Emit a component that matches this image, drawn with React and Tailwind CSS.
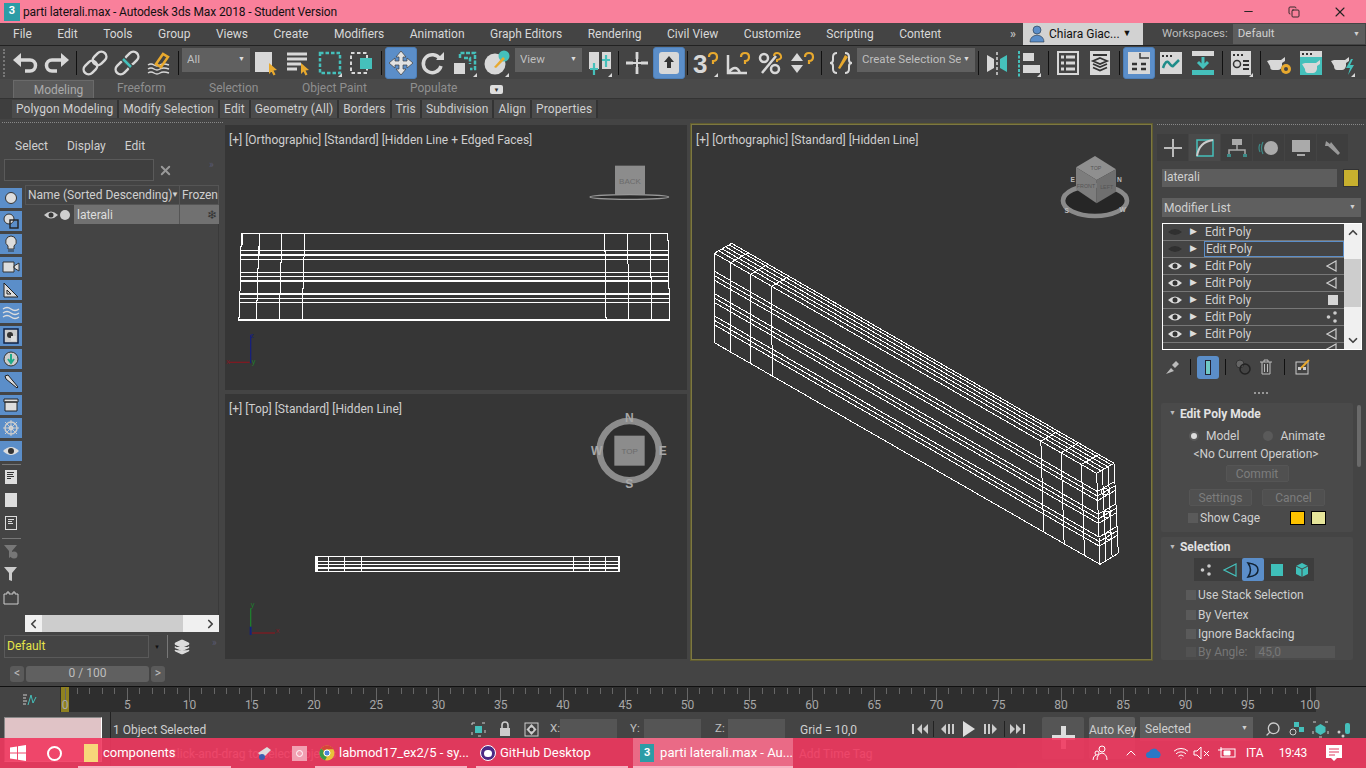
import { X, Minus, Copy, ChevronLeft, ChevronRight, ChevronUp, ChevronDown, Search, Wifi, Layers } from "lucide-react";

const LIGHT = "#d8d8d8";
const TEAL = "#45c0bb";
const GOLD = "#e8a92e";

const S = ({ s = 28, children }) => (
  <svg width={s} height={s} viewBox="0 0 28 28" fill="none">{children}</svg>
);

const Cursor = () => <path d="M17 14l8 7-3.500.5 2 4-2 1-2-4-2.500 2.500z" fill={GOLD} />;
const Corner = () => <path d="M26 28h-4l4-4z" fill={LIGHT} />;

const Undo = ({ flip }) => (
  <S>
    <g transform={flip ? "matrix(-1 0 0 1 28 0)" : undefined}>
      <path d="M8 11h11a5.500 5.500 0 0 1 0 11h-5" stroke={LIGHT} strokeWidth="3.500" />
      <path d="M10 4v14l-8-7z" fill={LIGHT} />
    </g>
  </S>
);

const Chain = ({ broken }) => (
  <S>
    <g stroke={LIGHT} strokeWidth="2.500" transform="rotate(-45 14 14)">
      <rect x="0" y="9" width="15" height="10" rx="5" />
      <rect x="13" y="9" width="15" height="10" rx="5" />
    </g>
    {broken && <path d="M9 9l10 10" stroke="#444" strokeWidth="5" />}
    {broken && <path d="M10 10l8 8" stroke={TEAL} strokeWidth="2.500" />}
  </S>
);

const BindIcon = () => (
  <S>
    <path d="M3 16q3-2 6 0t6 0 9 0M3 20q3-2 6 0t6 0 9 0M3 24q3-2 6 0t6 0 9 0" stroke={LIGHT} strokeWidth="1.500" />
    <path d="M11 15l7-10 5 3-7 10z" stroke={GOLD} strokeWidth="2.500" />
  </S>
);

const SelectObj = () => (
  <S><rect x="3" y="3" width="17" height="20" fill={LIGHT} /><Cursor /></S>
);

const SelectByName = () => (
  <S>
    <path d="M3 5h20M3 10h20M3 15h14M3 20h10" stroke={LIGHT} strokeWidth="3" />
    <Cursor />
  </S>
);

const RectRegion = () => (
  <S><rect x="4" y="4" width="20" height="20" stroke={TEAL} strokeWidth="2.500" strokeDasharray="3.500 2" /><Corner /></S>
);

const WindowCross = () => (
  <S>
    <rect x="3" y="4" width="16" height="20" stroke={LIGHT} strokeWidth="2" strokeDasharray="3.500 2.500" />
    <rect x="12" y="9" width="12" height="11" fill={TEAL} />
  </S>
);

const MoveIcon = () => (
  <S>
    <path d="M14 2l5 6h-3v4h4v-3l6 5-6 5v-3h-4v4h3l-5 6-5-6h3v-4H8v3l-6-5 6-5v3h4V8H9z" fill="#e2e2e2" stroke="#3c3c3c" strokeWidth=".7" />
  </S>
);

const RotateIcon = () => (
  <S>
    <path d="M21 10a9 9 0 1 0 1 7" stroke={LIGHT} strokeWidth="3.500" />
    <path d="M17 11h8V3z" fill={LIGHT} />
  </S>
);

const ScaleIcon = () => (
  <S>
    <rect x="3" y="14" width="11" height="11" fill={LIGHT} />
    <path d="M9 9V4h15v16h-5M13 9h6v6" stroke={TEAL} strokeWidth="2.500" strokeDasharray="4 1.500" />
    <Corner />
  </S>
);

const PlaceIcon = () => (
  <S>
    <circle cx="12" cy="15" r="10.500" fill={LIGHT} />
    <circle cx="21" cy="7" r="5.500" fill={TEAL} />
    <path d="M11 18l9-10 2 2-9 9z" fill={GOLD} />
    <Corner />
  </S>
);

const PivotIcon = () => (
  <S>
    <rect x="3" y="3" width="10" height="17" fill={LIGHT} />
    <rect x="16" y="3" width="9" height="17" fill={LIGHT} />
    <path d="M8 14v12M4 20h8M20 6v12M16 11h8" stroke={TEAL} strokeWidth="2.200" />
    <Corner />
  </S>
);

const Manipulate = () => (
  <S>
    <path d="M14 3v22M3 14h22" stroke={LIGHT} strokeWidth="2" />
    <path d="M14 3v7M14 18v7M3 14h7M18 14h7" stroke={LIGHT} strokeWidth="2.800" />
  </S>
);

const KeyOverride = () => (
  <S>
    <rect x="4" y="3" width="20" height="22" rx="3" fill={LIGHT} />
    <path d="M14 7l5 6h-3v6h-4v-6H9z" fill="#333" />
  </S>
);

const Snap = ({ label }) => (
  <S>
    <text x="1" y="24" fontSize="26" fontWeight="700" fill={LIGHT} fontFamily="Liberation Sans">{label}</text>
    <path d="M17 8q0-4 4-4t4 4-4 4v3" stroke={GOLD} strokeWidth="2.200" />
    <Corner />
  </S>
);

const AngleSnap = () => (
  <S>
    <path d="M4 6v18h19M4 24q8-10 12 0" stroke={LIGHT} strokeWidth="2.500" />
    <path d="M17 8q0-4 4-4t4 4-4 4v3" stroke={GOLD} strokeWidth="2.200" />
  </S>
);

const PercentSnap = () => (
  <S>
    <circle cx="8" cy="9" r="4" stroke={LIGHT} strokeWidth="2.500" />
    <circle cx="19" cy="20" r="4" stroke={LIGHT} strokeWidth="2.500" />
    <path d="M6 24L20 7" stroke={LIGHT} strokeWidth="2.500" />
    <path d="M18 7q0-3 3-3t4 3-4 4v2" stroke={GOLD} strokeWidth="2" />
  </S>
);

const SpinnerSnap = () => (
  <S>
    <path d="M3 12l6-8 6 8zM3 16h12l-6 8z" fill={LIGHT} />
    <path d="M17 8q0-4 4-4t4 4-4 4v3" stroke={GOLD} strokeWidth="2.200" />
  </S>
);

const NamedSets = () => (
  <S>
    <path d="M10 4q-4 0-4 4v3q0 3-3 3 3 0 3 3v3q0 4 4 4M18 4q4 0 4 4v3q0 3 3 3-3 0-3 3v3q0 4-4 4" stroke={LIGHT} strokeWidth="2" />
    <path d="M11 19l7-13 3 2-8 12z" fill={GOLD} />
  </S>
);

const Mirror = () => (
  <S>
    <path d="M4 6l7 4v9l-7 4z" fill={LIGHT} />
    <path d="M24 6l-7 4v9l7 4z" fill={TEAL} />
    <path d="M14 3v23" stroke={LIGHT} strokeWidth="1.500" strokeDasharray="3 2" />
  </S>
);

const Align = () => (
  <S>
    <path d="M4 2v26" stroke={TEAL} strokeWidth="2" strokeDasharray="3 1.500" />
    <rect x="8" y="4" width="11" height="8" fill={LIGHT} />
    <rect x="8" y="16" width="17" height="8" fill={LIGHT} />
    <Corner />
  </S>
);

const LayerMgr = () => (
  <S>
    <rect x="4" y="3" width="20" height="22" stroke={LIGHT} strokeWidth="2" />
    <path d="M7 8h3M12 8h9M7 14h3M12 14h9M7 20h3M12 20h9" stroke={LIGHT} strokeWidth="3" />
  </S>
);

const RibbonToggle = () => (
  <S>
    <rect x="4" y="2" width="20" height="24" fill={LIGHT} />
    <path d="M7 6h14" stroke="#333" strokeWidth="2" />
    <path d="M14 9l7 3-7 3-7-3zM7 15l7 3 7-3M7 18.500l7 3 7-3" stroke="#333" strokeWidth="1.800" />
  </S>
);

const Schematic = () => (
  <S>
    <rect x="3" y="3" width="22" height="22" fill={LIGHT} />
    <path d="M15 4v5h9" stroke="#3a3a3a" strokeWidth="1.500" />
    <path d="M7 15h5M16 15h5M7 20h5M16 20h5" stroke="#333" strokeWidth="2.500" />
  </S>
);

const CurveEditor = () => (
  <S>
    <rect x="3" y="3" width="22" height="22" fill={LIGHT} />
    <path d="M5 7h2M9 7h2M13 7h2" stroke="#333" strokeWidth="2" />
    <path d="M6 19q3-9 6-5t4 3 6-6" stroke="#1f8d8a" strokeWidth="2.500" />
  </S>
);

const DopeSheet = () => (
  <S>
    <rect x="3" y="2" width="22" height="5" fill={LIGHT} />
    <path d="M14 8v9M9 13l5 5 5-5" stroke={TEAL} strokeWidth="3" />
    <rect x="3" y="21" width="22" height="5" fill={TEAL} />
  </S>
);

const Material = () => (
  <S>
    <rect x="4" y="2" width="20" height="24" fill={LIGHT} />
    <path d="M6 6h2M10 6h2M14 6h2" stroke="#333" strokeWidth="2" />
    <circle cx="10" cy="15" r="3.500" stroke="#333" strokeWidth="1.500" />
    <path d="M16 12h6M16 16h6M16 20h6" stroke="#333" strokeWidth="2" />
    <Corner />
  </S>
);

const Teapot = ({ x = 5, y = 10 }) => (
  <path transform={`translate(${x} ${y})`} d="M3 4h11l4-3v4l-3 2v3q-1 4-4 4H6q-3 0-3-4L0 5z" fill={LIGHT} />
);

const RenderSetup = () => (
  <S>
    <Teapot x={2} y={7} />
    <circle cx="21" cy="20" r="5" fill={GOLD} />
    <circle cx="21" cy="20" r="2" fill="#444" />
  </S>
);

const RenderFrame = () => (
  <S>
    <rect x="3" y="2" width="22" height="24" fill={TEAL} />
    <rect x="3" y="2" width="22" height="6" fill={LIGHT} />
    <path d="M5 5h2M9 5h2M13 5h2" stroke="#333" strokeWidth="2" />
    <Teapot x={5} y={10} />
  </S>
);

const RenderGo = () => (
  <S>
    <Teapot x={2} y={7} />
    <path d="M22 10l-5 9h4l-2 7 6-10h-4l3-6z" fill={TEAL} />
    <Corner />
  </S>
);

const Sep = ({ w = 6 }) => (
  <div className="flex justify-center shrink-0" style={{ width: w }}>
    <div className="w-px h-[24px] my-[4px] bg-[#111]" />
  </div>
);

const Btn = ({ active, w = "w-[32px]", children }) => (
  <div className={`${w} h-[32px] shrink-0 flex items-center justify-center rounded-[3px] ${active ? "bg-[#5b8ec9] border border-[#4d7fb8]" : ""}`}>
    {children}
  </div>
);

const ToolSelect = ({ w, label }) => (
  <div className={`${w} h-[24px] -mt-[6px] shrink-0 bg-[#606060] flex items-center justify-between px-[5px] text-[#bfbfbf] text-[11.500px]`}>
    <span className="truncate">{label}</span>
    <span className="text-[7px] text-[#ddd]">▼</span>
  </div>
);

const Grip = () => <div className="w-[3px] h-[28px] border-l-2 border-dotted border-[#777] shrink-0" />;

const MENUS = ["File", "Edit", "Tools", "Group", "Views", "Create", "Modifiers", "Animation", "Graph Editors", "Rendering", "Civil View", "Customize", "Scripting", "Content"];
const TABS = ["Modeling", "Freeform", "Selection", "Object Paint", "Populate"];
const RIBBON = ["Polygon Modeling", "Modify Selection", "Edit", "Geometry (All)", "Borders", "Tris", "Subdivision", "Align", "Properties"];

function TitleBar() {
  return (
    <div className="h-[23px] bg-[#f9809b] flex items-center text-[#111] text-[12px] shrink-0">
      <div className="ml-[4px] w-[16px] h-[18px] bg-[#2c9ca6] text-white text-[11px] font-bold flex items-center justify-center">3</div>
      <span className="ml-[3px] tracking-[-0.13px]">parti laterali.max - Autodesk 3ds Max 2018 - Student Version</span>
      <div className="ml-auto mr-[3px] flex items-center text-[#222]">
        <div className="w-[46px] flex justify-center"><Minus size={13} strokeWidth={1.800} /></div>
        <div className="w-[46px] flex justify-center"><Copy size={12} strokeWidth={1.800} /></div>
        <div className="w-[46px] flex justify-center"><X size={16} strokeWidth={1.600} /></div>
      </div>
    </div>
  );
}

function MenuBar() {
  return (
    <div className="h-[23px] bg-[#444] flex items-center shrink-0 border-b border-[#222]">
      <div className="flex gap-[25.500px] pl-[13px] text-[12px] text-[#d8d8d8] w-[1010px]">
        {MENUS.map((m) => <span key={m}>{m}</span>)}
      </div>
      <span className="text-[#bbb] text-[12px] w-[13px] font-bold">»</span>
      <div className="w-[120px] h-[22px] bg-[#d2d2d2] flex items-center text-[#111] text-[12px]">
        <svg width="20" height="20" viewBox="0 0 20 20" className="ml-[4px]">
          <circle cx="10" cy="6" r="4" fill="#5b8ec9" stroke="#234" strokeWidth=".6" />
          <path d="M3 18q0-6 7-7 7 1 7 7z" fill="#5b8ec9" stroke="#234" strokeWidth=".6" />
        </svg>
        <span className="ml-[2px] whitespace-nowrap">Chiara Giac...</span>
        <span className="ml-[3px] text-[9px]">▼</span>
      </div>
      <span className="ml-[19px] text-[11.500px] text-[#bdbdbd]">Workspaces:</span>
      <div className="ml-[5px] w-[132px] h-[20px] bg-[#5d5d5d] flex items-center justify-between px-[5px] text-[11.500px] text-[#d0d0d0]">
        <span>Default</span>
        <span className="text-[7px]">▼</span>
      </div>
    </div>
  );
}

function MainToolbar() {
  return (
    <div className="h-[33px] bg-[#444] flex items-center shrink-0 pl-[3px]">
      <Grip />
      <div className="w-[3px]" />
      <Btn><Undo /></Btn>
      <Btn><Undo flip /></Btn>
      <Sep />
      <Btn><Chain /></Btn>
      <Btn><Chain broken /></Btn>
      <Btn><BindIcon /></Btn>
      <Sep w={7} />
      <ToolSelect w="w-[68px]" label="All" />
      <Btn><SelectObj /></Btn>
      <Btn><SelectByName /></Btn>
      <Btn><RectRegion /></Btn>
      <Btn><WindowCross /></Btn>
      <Sep w={7} />
      <Btn active><MoveIcon /></Btn>
      <Btn><RotateIcon /></Btn>
      <Btn><ScaleIcon /></Btn>
      <Btn><PlaceIcon /></Btn>
      <div className="w-[2px]" />
      <ToolSelect w="w-[67px]" label="View" />
      <div className="w-[2px]" />
      <Btn><PivotIcon /></Btn>
      <Sep w={5} />
      <Btn><Manipulate /></Btn>
      <Btn active><KeyOverride /></Btn>
      <Sep w={5} />
      <Btn><Snap label="3" /></Btn>
      <Btn><AngleSnap /></Btn>
      <Btn><PercentSnap /></Btn>
      <Btn><SpinnerSnap /></Btn>
      <Sep w={7} />
      <Btn><NamedSets /></Btn>
      <ToolSelect w="w-[118px]" label="Create Selection Se" />
      <Sep />
      <Btn><Mirror /></Btn>
      <Btn><Align /></Btn>
      <Sep w={7} />
      <Btn><LayerMgr /></Btn>
      <Btn><RibbonToggle /></Btn>
      <Sep w={7} />
      <Btn active><Schematic /></Btn>
      <Btn><CurveEditor /></Btn>
      <Btn><DopeSheet /></Btn>
      <Sep />
      <Btn><Material /></Btn>
      <Sep />
      <Btn><RenderSetup /></Btn>
      <Btn><RenderFrame /></Btn>
      <Btn><RenderGo /></Btn>
    </div>
  );
}

function Ribbon() {
  return (
    <div className="h-[41px] shrink-0 bg-[#444] pl-[8px] flex flex-col">
      <div className="h-[20px] flex items-end bg-[#4a4a4a] -ml-[8px] pl-[13px] border-b border-[#333] text-[12px] text-[#8f8f8f]">
        <div className="h-[18px] w-[81px] bg-[#5a5a5a] border border-b-0 border-[#6a6a6a] text-center text-[#aaa] leading-[18px] pl-[10px]">{TABS[0]}</div>
        <span className="ml-[23px] w-[92px] leading-[19px]">{TABS[1]}</span>
        <span className="w-[93px] leading-[19px]">{TABS[2]}</span>
        <span className="w-[108px] leading-[19px]">{TABS[3]}</span>
        <span className="w-[80px] leading-[19px]">{TABS[4]}</span>
        <div className="mb-[4px] w-[13px] h-[9px] bg-[#ddd] rounded-[2px] flex items-center justify-center text-[6px] text-[#333]">▼</div>
      </div>
      <div className="h-[20px] flex items-center -ml-[8px] pl-[12px] bg-[#3e3e3e] text-[12px] text-[#d0d0d0] tracking-[0.1px]">
        {RIBBON.map((r) => (
          <span key={r} className="px-[4px] h-[18px] leading-[18px] bg-[#4b4b4b] border-r-2 border-[#333] whitespace-nowrap">{r}</span>
        ))}
      </div>
    </div>
  );
}

const Blue = ({ children }) => (
  <div className="w-[22px] h-[20px] mb-[3px] bg-[#5b8ec9] flex items-center justify-center">{children}</div>
);

const SIDE_BLUE = [
  <circle key="a" cx="9" cy="9" r="5.500" fill="#ddd" stroke="#333" />,
  <g key="b"><circle cx="7" cy="7" r="5" fill="#ddd" stroke="#333" /><rect x="8" y="8" width="8" height="8" fill="none" stroke="#222" strokeWidth="1.400" /></g>,
  <path key="c" d="M9 1a5.500 5.500 0 0 1 3 10v3H6v-3A5.500 5.500 0 0 1 9 1zM6 16h6" fill="#ddd" stroke="#333" />,
  <path key="d" d="M1 4h11v10H1zM12 8l5-3v8l-5-3z" fill="#ddd" stroke="#333" />,
  <path key="e" d="M2 2v14h14zM5 9v4h4z" fill="#ddd" stroke="#222" />,
  <path key="f" d="M1 5q4-3 8 0t8 0M1 9q4-3 8 0t8 0M1 13q4-3 8 0t8 0" fill="none" stroke="#ddd" strokeWidth="1.300" />,
  <g key="g"><rect x="2" y="2" width="14" height="14" fill="#ccc" stroke="#124" strokeWidth="1.500" /><circle cx="8" cy="8" r="3" fill="#333" /><rect x="9" y="9" width="5" height="5" fill="#ddd" /></g>,
  <g key="h"><circle cx="9" cy="9" r="7" fill="#ccc" stroke="#333" /><path d="M9 4v8M6 9l3 4 3-4" stroke="#2a8" strokeWidth="2" fill="none" /></g>,
  <path key="i" d="M3 3l3-1 10 12-1 1L4 6z" fill="#ddd" stroke="#222" />,
  <path key="j" d="M2 3h14v3H2zM3 6h12v9H3z" fill="#ddd" stroke="#222" />,
  <g key="k"><circle cx="9" cy="9" r="6" fill="none" stroke="#ccc" strokeWidth="1.500" /><circle cx="9" cy="9" r="2.500" fill="#ddd" /><path d="M9 1v16M1 9h16M3 3l12 12M15 3L3 15" stroke="#ccc" /></g>,
  <g key="l"><path d="M1 9q8-8 16 0-8 8-16 0z" fill="#ddd" /><circle cx="9" cy="9" r="3" fill="#333" /></g>,
];

function SceneExplorer() {
  return (
    <div className="w-[225px] h-full bg-[#444] shrink-0 flex flex-col text-[12px] text-[#d0d0d0]">
      <div className="h-[3px] mt-[2px] mx-[2px] border-t border-dotted border-[#888]" />
      <div className="flex mt-[14px] h-[14px] items-center pl-[15px] gap-[19px]">
        <span>Select</span><span>Display</span><span>Edit</span>
      </div>
      <div className="mt-[6px] flex items-center h-[22px]">
        <div className="ml-[4px] w-[150px] h-[22px] border border-[#5a5a5a] bg-[#3f3f3f]" />
        <X size={15} strokeWidth={3} className="ml-[4px] text-[#9a9a9a]" />
        <span className="ml-[36px] -mt-[12px] text-[10px] text-[#585870]">»</span>
      </div>
      <div className="mt-[4px] h-[447px] flex">
        <div className="w-[25px] pt-[3px] shrink-0">
          {SIDE_BLUE.map((icon, i) => (
            <Blue key={i}><svg width="18" height="18" viewBox="0 0 18 18">{icon}</svg></Blue>
          ))}
          <div className="mt-[2px] ml-[2px] w-[19px] h-px bg-[#777]" />
          <div className="ml-[5px] mt-[5px] w-[12px] h-[14px] bg-[#ddd] flex flex-col gap-[1px] p-[2px]">
            <div className="h-px w-[7px] bg-[#333]" /><div className="h-px w-[6px] bg-[#333]" /><div className="h-px w-[7px] bg-[#333]" /><div className="h-px w-[4px] bg-[#333]" />
          </div>
          <div className="ml-[5px] mt-[9px] w-[12px] h-[14px] bg-[#ddd]" />
          <div className="ml-[5px] mt-[9px] w-[12px] h-[14px] border border-[#ddd] flex flex-col gap-[1px] p-[2px]">
            <div className="h-px w-[6px] bg-[#ddd]" /><div className="h-px w-[4px] bg-[#ddd]" /><div className="h-px w-[5px] bg-[#ddd]" />
          </div>
          <div className="mt-[8px] ml-[2px] w-[19px] h-px bg-[#777]" />
          <svg width="22" height="16" viewBox="0 0 22 16" className="mt-[5px]"><path d="M4 1h13l-5 6v5l-3 2V7z" fill="#777" /><circle cx="14" cy="11" r="3.500" fill="#777" /></svg>
          <svg width="22" height="16" viewBox="0 0 22 16" className="mt-[6px]"><path d="M4 1h13l-5 6v8l-3-1V7z" fill="#ccc" /></svg>
          <svg width="22" height="16" viewBox="0 0 22 16" className="mt-[8px]"><path d="M4 4h3V2h2v2h4V2h2v2h3v10H4z" fill="none" stroke="#ccc" /></svg>
        </div>
        <div className="w-[194px] flex flex-col">
          <div className="h-[20px] flex items-center border border-[#555] bg-[#444]">
            <span className="pl-[2px] w-[145px] whitespace-nowrap">Name (Sorted Descending)</span>
            <span className="text-[8px] w-[10px]">▼</span>
            <div className="h-full border-l border-[#555] pl-[2px] leading-[18px] whitespace-nowrap">Frozen</div>
          </div>
          <div className="h-[19px] flex items-center">
            <svg width="16" height="12" viewBox="0 0 16 12" className="ml-[18px]">
              <path d="M1 6q7-7 14 0-7 7-14 0z" fill="#ccc" /><circle cx="8" cy="6" r="2.500" fill="#333" />
            </svg>
            <div className="ml-[1px] w-[10px] h-[10px] rounded-full bg-[#d0d0d0]" />
            <div className="ml-[4px] flex-1 h-full bg-[#717171] flex items-center justify-between pl-[3px] text-[#ddd]">
              <span>laterali</span>
              <div className="h-full w-[40px] border-l border-[#555] flex items-center justify-end pr-[2px] text-[#333] text-[12px]">❄</div>
            </div>
          </div>
          <div className="flex-1 border-r border-[#3a3a3a]" />
          <div className="h-[17px] bg-[#f0f0f0] flex items-center">
            <ChevronLeft size={14} strokeWidth={3} className="text-[#444] w-[17px]" />
            <div className="w-[141px] h-full bg-[#cdcdcd]" />
            <div className="flex-1" />
            <ChevronRight size={14} strokeWidth={3} className="text-[#444] w-[17px]" />
          </div>
        </div>
      </div>
      <div className="mt-[3px] h-[23px] flex items-center">
        <div className="ml-[4px] w-[145px] h-[23px] border border-[#5a5a5a] text-[#e5e54a] pl-[2px] leading-[20px]">Default</div>
        <span className="ml-[5px] text-[6px] text-[#111]">▼</span>
        <div className="ml-[7px] w-px h-[23px] bg-[#777]" />
        <Layers size={16} className="ml-[6px] text-[#ddd]" fill="#ddd" />
        <span className="ml-[22px] -mt-[8px] text-[10px] text-[#585870]">»</span>
      </div>
    </div>
  );
}

const FRACS = [0, 0.2, 0.25, 0.3, 0.45, 0.5, 0.55, 0.7, 0.75, 0.8, 1];
const lerp = (a, b, t) => [a[0] + (b[0] - a[0]) * t, a[1] + (b[1] - a[1]) * t];
const Seg = ({ a, b }) => <line x1={a[0]} y1={a[1]} x2={b[0]} y2={b[1]} />;

const FRONT_V = [
  "51,325 51,360 47,365 47,495 43,500 43,575 40,585",
  "103,325 101,430 97,432 97,525 94,530 94,585",
  "170,325 170,412 166,414 166,505 163,507 163,585",
  "238,325 238,395 235,397 235,490 232,492 232,585",
  "1138,325 1138,378 1141,380 1141,570 1145,585",
  "1207,325 1207,415 1210,418 1210,585",
  "1276,325 1276,455 1279,458 1279,585",
  "1328,325 1328,345 1331,350 1331,490 1334,490 1334,585",
];

function Axis({ labels }) {
  const [h, v] = labels;
  return (
    <g fontSize="22" fontFamily="Liberation Sans">
      <path d="M77 630v85" stroke="#17207a" strokeWidth="4" />
      <path d="M12 712h62" stroke="#7d1a22" strokeWidth="4" />
      <text x="3" y="716" fill="#7d1a22">{h}</text>
      <text x="76" y="640" fill="#17207a">{v}</text>
      <text x="80" y="716" fill="#1e7d2d">y</text>
    </g>
  );
}

function BackView() {
  return (
    <svg viewBox="0 0 1395 795" className="absolute left-0 top-0 w-[465px] h-[265px]" fill="none">
      <g stroke="#fff" strokeWidth="3.500" shapeRendering="crispEdges">
        {FRONT_V.map((p) => <polyline key={p} points={p} />)}
        {FRACS.map((f) => {
          const y = 325 + f * 260;
          return <line key={f} x1={51 - f * 11} y1={y} x2={1328 + f * 7} y2={y} />;
        })}
      </g>
      <Axis labels={["x", "z"]} />
      <rect x="1170" y="122" width="90" height="88" fill="#8c8c8c" />
      <text x="1215" y="176" textAnchor="middle" fontSize="24" fontFamily="Liberation Sans" fill="#6b6b6b">BACK</text>
      <ellipse cx="1213" cy="216" rx="118" ry="7" stroke="#999" strokeWidth="4" fill="#2a2a2a" />
    </svg>
  );
}

function TopView() {
  return (
    <svg viewBox="0 0 1395 795" className="absolute left-0 top-[1px] w-[465px] h-[265px]" fill="none">
      <g stroke="#fff" strokeWidth="3.500" shapeRendering="crispEdges">
        <rect x="272" y="485" width="911" height="44" strokeWidth="4" />
        {[499, 509, 519].map((y) => <line key={y} x1="272" y1={y} x2="1183" y2={y} />)}
        {[310, 358, 410, 1045, 1093, 1141].map((x) => <line key={x} x1={x} y1="485" x2={x} y2="530" />)}
        <line x1="274" y1="485" x2="274" y2="530" strokeWidth="7" />
        <line x1="1181" y1="485" x2="1181" y2="530" strokeWidth="7" />
      </g>
      <path d="M77 640v80" stroke="#1e7d2d" strokeWidth="4" />
      <path d="M80 714h70" stroke="#7d1a22" strokeWidth="4" />
      <path d="M77 695v25" stroke="#17207a" strokeWidth="6" />
      <g fontSize="22" fontFamily="Liberation Sans">
        <text x="77" y="636" fill="#1e7d2d">y</text>
        <text x="152" y="714" fill="#7d1a22">x</text>
      </g>
      <circle cx="1213" cy="167" r="89" stroke="#8c8c8c" strokeWidth="20" fill="#2e2e2e" />
      <rect x="1168" y="122" width="91" height="90" fill="#8c8c8c" />
      <g fontFamily="Liberation Sans" textAnchor="middle">
        <text x="1214" y="176" fontSize="24" fill="#6b6b6b">TOP</text>
        <g fontSize="36" fontWeight="700" fill="#a8a8a8">
          <text x="1213" y="82">N</text>
          <text x="1213" y="278">S</text>
          <text x="1115" y="180">W</text>
          <text x="1313" y="180">E</text>
        </g>
      </g>
    </svg>
  );
}

function PerspView() {
  const A = [43, 70], B = [95, 40], D = [1190, 730], C = [1242, 700], E = [43, 338], F = [1200, 1003], G = [1255, 970];
  return (
    <svg viewBox="0 0 1290 1035" className="absolute left-[8px] top-[105px] w-[430px] h-[345px]" fill="none">
      <g stroke="#fff" strokeWidth="3" shapeRendering="crispEdges">
        {FRACS.map((f) => <Seg key={f} a={lerp(A, E, f)} b={lerp(D, F, f)} />)}
        {[0, 0.25, 0.45, 0.65, 0.85, 1].map((t) => <Seg key={t} a={lerp(A, B, t)} b={lerp(D, C, t)} />)}
        {[0, 0.0427, 0.095, 0.15, 0.854, 0.907, 0.96, 1].map((s) => (
          <g key={s}>
            <Seg a={lerp(A, D, s)} b={lerp(E, F, s)} />
            <Seg a={lerp(A, D, s)} b={lerp(B, C, s)} />
          </g>
        ))}
        {FRACS.map((f) => <Seg key={f} a={lerp(D, F, f)} b={lerp(C, G, f)} />)}
        {[0.33, 0.66, 1].map((t) => <Seg key={t} a={lerp(D, C, t)} b={lerp(F, G, t)} />)}
        <Seg a={F} b={G} />
        {[[1215, 785], [1220, 853], [1225, 918]].map(([x, y]) => <circle key={x} cx={x} cy={y} r="10" />)}
      </g>
    </svg>
  );
}

function PerspCube() {
  return (
    <svg viewBox="0 0 270 225" className="absolute left-[358px] top-[25px] w-[90px] h-[75px]">
      <ellipse cx="135" cy="152" rx="96" ry="46" fill="#262626" stroke="#8a8a8a" strokeWidth="14" />
      <path d="M78 52l57-34 63 40-58 32z" fill="#8f8f8f" />
      <path d="M78 52l62 38v70l-62-42z" fill="#7d7d7d" />
      <path d="M140 90l58-32v67l-58 35z" fill="#6f6f6f" />
      <g fontSize="16" fontFamily="Liberation Sans" fill="#555" textAnchor="middle">
        <text x="138" y="60">TOP</text>
        <text x="108" y="115">FRONT</text>
        <text x="170" y="118">LEFT</text>
      </g>
      <g fontSize="20" fontWeight="700" fontFamily="Liberation Sans" fill="#bbb" textAnchor="middle">
        <text x="68" y="95">E</text>
        <text x="208" y="95">N</text>
        <text x="50" y="190">S</text>
        <text x="218" y="185">W</text>
      </g>
    </svg>
  );
}

const VpLabel = ({ children }) => (
  <div className="relative pl-[4px] pt-[6px] text-[12px] text-[#cfcfcf] whitespace-pre z-10">{children}</div>
);

function Viewports() {
  return (
    <div className="w-[930px] h-full shrink-0 flex pt-[4px] bg-[#444]">
      <div className="w-[462px] flex flex-col gap-[4px] pt-[1px]">
        <div className="relative h-[265px] bg-[#363636] overflow-hidden">
          <BackView />
          <VpLabel>[+] [Orthographic] [Standard] [Hidden Line + Edged Faces]</VpLabel>
        </div>
        <div className="relative h-[265px] bg-[#363636] overflow-hidden">
          <TopView />
          <VpLabel>[+] [Top] [Standard] [Hidden Line]</VpLabel>
        </div>
      </div>
      <div className="relative ml-[4px] w-[461px] h-[536px] bg-[#363636] border border-[#7d7840] outline outline-1 outline-[#5f5b30]">
        <PerspView />
        <PerspCube />
        <VpLabel>[+] [Orthographic] [Standard] [Hidden Line]</VpLabel>
      </div>
    </div>
  );
}

const EyeOpen = ({ dim }) => (
  <svg width="16" height="12" viewBox="0 0 16 12">
    {dim
      ? <path d="M1 6q7-6 14 0-7 6-14 0z" fill="#303030" />
      : <g><path d="M1 6q7-7 14 0-7 7-14 0z" fill="#ddd" /><circle cx="8" cy="6" r="2.500" fill="#333" /></g>}
  </svg>
);

const TriOutline = () => (
  <svg width="12" height="12" viewBox="0 0 12 12" fill="none"><path d="M1 6l9-5v10z" stroke="#ccc" strokeWidth="1.200" /></svg>
);
const SquareFill = () => <div className="w-[10px] h-[10px] bg-[#d5d5d5]" />;
const Dots = () => (
  <svg width="12" height="12" viewBox="0 0 12 12" fill="#ccc"><circle cx="2.500" cy="6" r="1.800" /><circle cx="9" cy="2" r="1.800" /><circle cx="9" cy="10" r="1.800" /></svg>
);

const STACK = [
  { dim: true },
  { dim: true, sel: true },
  { end: <TriOutline /> },
  { end: <TriOutline /> },
  { end: <SquareFill /> },
  { end: <Dots /> },
  { end: <TriOutline /> },
];

const CheckRow = ({ label, dim, cls = "" }) => (
  <div className={`flex items-center h-[14px] ${cls}`}>
    <div className={`w-[10px] h-[10px] bg-[#5a5a5a] ${dim ? "opacity-50" : ""}`} />
    <span className={`ml-[2px] whitespace-nowrap ${dim ? "text-[#777]" : ""}`}>{label}</span>
  </div>
);

const Ghost = ({ w, label }) => (
  <div className={`${w} h-[17px] bg-[#505050] border border-[#555] rounded-[2px] flex items-center justify-center text-[#7d7d7d]`}>{label}</div>
);

function CommandPanel() {
  return (
    <div className="w-[211px] h-full bg-[#444] shrink-0 flex flex-col text-[#d0d0d0] text-[12px] overflow-hidden">
      <div className="h-[3px] mt-[4px] mx-[2px] border-t border-dotted border-[#888]" />
      <div className="mt-[7px] h-[27px] flex pl-[1px] ml-[1px]">
        {[
          <path key="a" d="M2 11h18M11 2v18" stroke="#bbb" strokeWidth="2" />,
          <g key="b" stroke={TEAL} strokeWidth="1.500"><rect x="3" y="3" width="16" height="16" /><path d="M3 19Q5 5 19 3" stroke="#ccc" strokeWidth="2" /></g>,
          <g key="c"><rect x="6" y="2" width="10" height="6" fill="#aaa" /><path d="M11 8v5M3 17v-4h16v4" stroke="#aaa" strokeWidth="1.500" /><path d="M1 17h4v3H1zM17 17h4v3h-4z" fill="#3d8b88" /></g>,
          <g key="d"><circle cx="13" cy="11" r="7" fill="#aaa" /><path d="M5 5q-3 6 0 12M2 7q-2 4 0 8" stroke="#3d8b88" strokeWidth="1.200" /></g>,
          <g key="e"><rect x="2" y="3" width="18" height="12" fill="#aaa" /><path d="M7 18h8" stroke="#aaa" strokeWidth="2" /></g>,
          <path key="f" d="M4 4l4 3 1-2 9 11-2 2-10-9-3 0z" fill="#999" />,
        ].map((ic, i) => (
          <div key={i} className={`w-[32px] h-[27px] flex items-center justify-center ${i === 1 ? "bg-[#4a4a4a]" : "bg-[#3e3e3e]"} border-r border-[#444]`}>
            <svg width="22" height="22" viewBox="0 0 22 22" fill="none">{ic}</svg>
          </div>
        ))}
      </div>
      <div className="mt-[8px] flex pl-[7px]">
        <div className="w-[175px] h-[18px] bg-[#5d5d5d] pl-[2px] leading-[17px] text-[12px]">laterali</div>
        <div className="ml-[6px] w-[16px] h-[18px] bg-[#c8b02e] border border-[#333]" />
      </div>
      <div className="mt-[11px] mx-[7px] w-[199px] h-[19px] bg-[#5f5f5f] flex items-center justify-between px-[2px] text-[12px]">
        <span>Modifier List</span><span className="text-[7px] pr-[3px]">▼</span>
      </div>
      <div className="mt-[6px] ml-[7px] w-[200px] h-[127px] border border-white flex overflow-hidden bg-[#444]">
        <div className="w-[181px]">
          {STACK.map((row, i) => (
            <div key={i} className="h-[17px] flex items-center border-b border-[#777]">
              <div className="w-[24px] flex justify-center"><EyeOpen dim={row.dim} /></div>
              <span className="ml-[3px] text-[9px] text-[#ddd] w-[14px]">▶</span>
              <div className={`flex-1 flex items-center justify-between h-[16px] pl-[1px] pr-[2px] text-[12px] ${row.sel ? "border border-[#5b8ec9]" : ""}`}>
                <span>Edit Poly</span>
                <span className="pr-[4px]">{row.end}</span>
              </div>
            </div>
          ))}
          <div className="h-[6px] flex justify-end pr-[6px]"><TriOutline /></div>
        </div>
        <div className="flex-1 bg-[#f0f0f0] flex flex-col items-center">
          <ChevronUp size={14} strokeWidth={3} className="text-[#444] h-[17px]" />
          <div className="mt-[18px] w-full h-[48px] bg-[#cdcdcd]" />
          <div className="flex-1" />
          <ChevronDown size={14} strokeWidth={3} className="text-[#444] h-[17px]" />
        </div>
      </div>
      <div className="mt-[5px] h-[24px] flex items-center pl-[10px]">
        <svg width="16" height="16" viewBox="0 0 16 16"><path d="M1 15l5-6 3 3zM7 6l4-4 3 3-4 4z" fill="#bbb" /></svg>
        <div className="ml-[9px] w-px h-[16px] bg-[#111]" />
        <div className="ml-[6px] w-[22px] h-[23px] bg-[#5b8ec9] rounded-[3px] flex items-center justify-center">
          <div className="w-[6px] h-[15px] bg-[#6fc8c4] border border-[#223]" />
        </div>
        <div className="ml-[6px] w-px h-[16px] bg-[#111]" />
        <svg width="18" height="18" viewBox="0 0 18 18" fill="none" className="ml-[8px]"><circle cx="6" cy="6" r="4" fill="#666" stroke="#333" /><circle cx="11" cy="11" r="5" stroke="#222" strokeWidth="1.500" /></svg>
        <svg width="14" height="16" viewBox="0 0 14 16" fill="none" className="ml-[7px]"><path d="M1 3h12M5 3V1h4v2M3 3v12h8V3M5.500 5v8M8.500 5v8" stroke="#bbb" /></svg>
        <div className="ml-[11px] w-px h-[16px] bg-[#111]" />
        <svg width="16" height="16" viewBox="0 0 16 16" fill="none" className="ml-[10px]"><rect x="1" y="3" width="12" height="12" stroke="#ccc" /><path d="M3 8h3v3H3zM8 8h3v3H8z" fill="#ccc" /><path d="M6 9l8-8" stroke={GOLD} strokeWidth="2" /></svg>
      </div>
      <div className="mt-[13px] mx-auto w-[14px] border-t-2 border-dotted border-[#999]" />
      <div className="mt-[9px] flex flex-1 min-h-0 pl-[6px]">
        <div className="w-[192px] flex flex-col gap-[5px] min-h-0">
          <div className="h-[129px] bg-[#4a4a4a] rounded-[2px] flex flex-col pl-[4px]">
            <div className="h-[19px] flex items-center mt-[1px]">
              <span className="text-[7px] text-[#bbb] ml-[4px]">▼</span>
              <span className="ml-[4px] font-bold text-[12px] text-[#e2e2e2]">Edit Poly Mode</span>
            </div>
            <div className="mt-[5px] flex items-center h-[16px] pl-[24px]">
              <div className="w-[10px] h-[10px] rounded-full bg-[#ddd] border-2 border-[#5a5a5a]" />
              <span className="ml-[7px]">Model</span>
              <div className="ml-[24px] w-[10px] h-[10px] rounded-full bg-[#5a5a5a]" />
              <span className="ml-[7px]">Animate</span>
            </div>
            <div className="mt-[1px] text-center pr-[4px] -ml-[2px]">&lt;No Current Operation&gt;</div>
            <div className="mt-[2px] flex justify-center pr-[4px]"><Ghost w="w-[63px]" label="Commit" /></div>
            <div className="mt-[7px] flex justify-center gap-[10px] pr-[4px]"><Ghost w="w-[63px]" label="Settings" /><Ghost w="w-[63px]" label="Cancel" /></div>
            <div className="mt-[4px] flex items-center pl-[23px] h-[15px]">
              <div className="w-[102px]"><CheckRow label="Show Cage" /></div>
              <div className="w-[15px] h-[14px] bg-[#fcc200] border border-black" />
              <div className="ml-[6px] w-[15px] h-[14px] bg-[#e6e59a] border border-black" />
            </div>
          </div>
          <div className="flex-1 min-h-0 bg-[#4a4a4a] rounded-[2px] overflow-hidden flex flex-col">
            <div className="h-[18px] mt-[1px] flex items-center pl-[8px]">
              <span className="text-[7px] text-[#bbb]">▼</span>
              <span className="ml-[4px] font-bold text-[12px] text-[#e2e2e2]">Selection</span>
            </div>
            <div className="mt-[2px] ml-[33px] w-[120px] h-[23px] shrink-0 bg-[#3d3d3d] flex items-center">
              <div className="w-[24px] flex justify-center"><Dots /></div>
              <div className="w-[24px] flex justify-center">
                <svg width="14" height="14" viewBox="0 0 14 14" fill="none"><path d="M1 7l12-6v12z" stroke={TEAL} strokeWidth="1.200" /></svg>
              </div>
              <div className="w-[22px] h-[23px] bg-[#5b8ec9] rounded-[2px] flex items-center justify-center">
                <svg width="14" height="18" viewBox="0 0 14 18" fill="none"><path d="M2 2q10 1 10 7t-10 7q5-7 0-14z" stroke="#123" strokeWidth="1.500" /></svg>
              </div>
              <div className="w-[26px] flex justify-center"><div className="w-[12px] h-[12px] bg-[#3fbfb9]" /></div>
              <div className="w-[24px] flex justify-center">
                <svg width="16" height="16" viewBox="0 0 16 16"><path d="M8 1l6 3v8l-6 3-6-3V4z" fill="#3fbfb9" /><path d="M2 4l6 3 6-3M8 7v8" stroke="#444" fill="none" /></svg>
              </div>
            </div>
            <div className="mt-[6px] pl-[25px] flex flex-col gap-[5.500px] pt-[1px]">
              <CheckRow label="Use Stack Selection" />
              <CheckRow label="By Vertex" />
              <CheckRow label="Ignore Backfacing" />
              <div className="flex items-center h-[14px] -mt-[2px]">
                <CheckRow label="By Angle:" dim />
                <div className="ml-[7px] w-[80px] h-[12px] bg-[#555] text-[#777] pl-[4px] leading-[12px]">45,0</div>
              </div>
            </div>
          </div>
        </div>
        <div className="ml-[4px] mt-[2px] w-[4px] h-[62px] bg-[#6a6a6a] rounded-[2px]" />
      </div>
    </div>
  );
}

function TimeSlider() {
  return (
    <div className="h-[26px] bg-[#444] flex items-center shrink-0 pl-[10px] pt-[1px] text-[12px] text-[#bdbdbd]">
      <div className="w-[14px] h-[16px] bg-[#5a5a5a] rounded-[3px] text-center leading-[15px]">&lt;</div>
      <div className="ml-[2px] w-[123px] h-[16px] bg-[#606060] rounded-[3px] text-center leading-[15px]">0 / 100</div>
      <div className="ml-[2px] w-[14px] h-[16px] bg-[#5a5a5a] rounded-[3px] text-center leading-[15px]">&gt;</div>
    </div>
  );
}

function TrackBar() {
  const ticks = Array.from({ length: 101 }, (_, i) => i);
  const xOf = (i) => 5 + i * 12.45;
  return (
    <div className="h-[26px] bg-[#444] flex shrink-0 border-t border-[#111]">
      <div className="w-[60px] flex items-center pl-[22px] shrink-0">
        <svg width="16" height="16" viewBox="0 0 16 16" fill="none"><path d="M1 3h4M1 6h3M1 9h4M1 12h3" stroke="#ccc" /><path d="M6 13l3-10 2 8 3-6" stroke={TEAL} /></svg>
      </div>
      <svg width="1256" height="25" className="bg-[#2e2e2e] shrink-0 overflow-visible">
        <rect x="1" y="0" width="8" height="25" fill="#8f8120" />
        {ticks.map((i) => (
          <line key={i} x1={xOf(i)} x2={xOf(i)} y1="1" y2={i % 5 === 0 ? 15 : 7} stroke="#666" shapeRendering="crispEdges" />
        ))}
        {ticks.filter((i) => i % 5 === 0).map((i) => (
          <text key={i} x={xOf(i)} y="22" textAnchor="middle" fontSize="12" fill="#a8a8a8" fontFamily="Roboto">{i}</text>
        ))}
      </svg>
    </div>
  );
}

function CoordField({ label, w, lw }) {
  return (
    <div className={`flex items-center ${w}`}>
      <span className={`text-[11.500px] text-[#c0c0c0] ${lw}`}>{label}</span>
      <div className="w-[57px] h-[20px] bg-[#555] shrink-0" />
    </div>
  );
}

const Tp = ({ d }) => (
  <svg width="20" height="14" viewBox="0 0 20 14" fill="#ccc"><path d={d} /></svg>
);

function StatusBar() {
  return (
    <div className="flex-1 bg-[#444] flex relative text-[12px] text-[#d0d0d0]">
      <div className="ml-[4px] mt-[5px] w-[98px] h-[45px] bg-[#e0c3c6] border border-white border-l-[#888] border-t-[#888] shrink-0" />
      <div className="flex-1 flex flex-col border-l border-[#222] ml-[8px]">
        <div className="h-[26px] flex items-start">
          <span className="ml-[2px] mt-[9px] w-[352px] whitespace-nowrap">1 Object Selected</span>
          <div className="w-[26px] mt-[10px] flex justify-center">
            <svg width="15" height="15" viewBox="0 0 15 15" fill="none"><rect x="1" y="1" width="13" height="13" stroke="#ccc" strokeDasharray="3 7" /><rect x="4" y="4" width="7" height="7" fill={TEAL} /></svg>
          </div>
          <div className="w-[27px] mt-[9px] flex justify-center">
            <svg width="14" height="16" viewBox="0 0 14 16" fill="none"><rect x="2" y="7" width="10" height="8" fill="#ccc" /><path d="M4 7V4a3 3 0 0 1 6 0v3" stroke="#ccc" strokeWidth="1.600" /></svg>
          </div>
          <div className="w-[27px] mt-[10px] flex justify-center">
            <svg width="15" height="15" viewBox="0 0 15 15" fill="none"><rect x="1" y="1" width="13" height="13" stroke="#ccc" /><path d="M7.500 2l5 5.500-5 5.500-5-5.500z" fill="#ccc" /><circle cx="7.500" cy="7.500" r="2" fill="#333" /></svg>
          </div>
          <div className="flex mt-[7px] ml-[5px]">
            <CoordField label="X:" w="w-[80px]" lw="w-[10px]" />
            <CoordField label="Y:" w="w-[85px]" lw="w-[14px]" />
            <CoordField label="Z:" w="w-[85px]" lw="w-[13px]" />
          </div>
          <span className="mt-[9px] w-[110px] whitespace-nowrap">Grid = 10,0</span>
          <div className="flex items-center h-[20px] gap-[3px] mt-[7px]">
            <Tp d="M2 2h2v10H2zM12 2v10L7 7zM18 2v10l-5-5z" />
            <div className="w-px h-[16px] bg-[#222]" />
            <Tp d="M9 2v10L4 7zM11 2h2v10h-2zM15 2h2v10h-2z" />
            <svg width="14" height="18" viewBox="0 0 14 18" fill="#ddd" className="mx-[2px]"><path d="M1 1v16l12-8z" /></svg>
            <Tp d="M3 2h2v10H3zM7 2h2v10H7zM11 2l5 5-5 5z" />
            <div className="w-px h-[16px] bg-[#222]" />
            <Tp d="M2 2l5 5-5 5zM8 2l5 5-5 5zM15 2h2v10h-2z" />
          </div>
          <div className="ml-[14px] mt-[5px] w-[42px] h-[42px] bg-[#555] rounded-[2px] flex items-start justify-center pt-[9px] shrink-0">
            <div className="relative w-[23px] h-[23px]">
              <div className="absolute left-[9px] top-0 w-[5px] h-[23px] bg-[#ddd]" />
              <div className="absolute left-0 top-[9px] w-[23px] h-[5px] bg-[#ddd]" />
            </div>
          </div>
          <div className="ml-[5px] mt-[5px] w-[46px] h-[42px] bg-[#606060] rounded-[2px] pt-[4px] text-center whitespace-nowrap shrink-0">Auto Key</div>
          <div className="ml-[5px] mt-[5px] w-[113px] h-[24px] bg-[#5d5d5d] flex items-start justify-between px-[5px] pt-[3px] shrink-0">
            <span>Selected</span><span className="text-[7px] pt-[3px]">▼</span>
          </div>
          <div className="ml-[12px] flex gap-[7px] mt-[9px]">
            <Search size={16} className="text-[#ccc] -scale-x-100" />
            <svg width="17" height="17" viewBox="0 0 17 17"><rect x="6" y="1" width="5" height="5" fill={TEAL} /><rect x="11" y="6" width="5" height="5" fill={TEAL} /><circle cx="5" cy="11" r="3" fill="none" stroke="#ccc" /></svg>
            <svg width="17" height="17" viewBox="0 0 17 17" fill="none"><rect x="1" y="1" width="15" height="15" stroke="#ccc" strokeDasharray="3 9" /><path d="M8.500 3l5 3v5l-5 3-5-3V6z" fill={TEAL} /></svg>
            <svg width="17" height="17" viewBox="0 0 17 17"><rect x="9" y="2" width="5" height="11" rx="2" fill={TEAL} /><circle cx="3" cy="11" r="1.500" fill="#ccc" /><circle cx="7" cy="15" r="1.500" fill="#ccc" /></svg>
          </div>
        </div>
        <div className="flex items-center h-[26px] text-[#ccc] pt-[5px]">
          <span className="ml-[58px] w-[630px] whitespace-nowrap">Click-and-drag to select objects</span>
          <span className="whitespace-nowrap">Add Time Tag</span>
        </div>
      </div>
    </div>
  );
}

const ChromeIcon = () => (
  <svg width="16" height="16" viewBox="0 0 16 16">
    <circle cx="8" cy="8" r="7.500" fill="#e8c23a" />
    <path d="M8 .5a7.500 7.500 0 0 1 6.500 3.750H8A3.750 3.750 0 0 0 4.800 6L2 3.500A7.500 7.500 0 0 1 8 .5z" fill="#d6453a" />
    <path d="M2 3.500L4.800 6A3.750 3.750 0 0 0 8 11.750L6 15.200A7.500 7.500 0 0 1 2 3.500z" fill="#3b9a4a" />
    <circle cx="8" cy="8" r="3" fill="#4a86d8" stroke="#fff" />
  </svg>
);

const TaskItem = ({ w, ml, bg = "", children }) => (
  <div className={`${w} ${ml} ${bg} h-full relative flex items-center shrink-0`}>
    {children}
    <div className="absolute left-0 right-0 bottom-0 h-[2px] bg-[#f6b3c2]" />
  </div>
);

function Taskbar() {
  return (
    <div className="absolute left-0 right-0 bottom-0 h-[30px] bg-[#f1395f]/90 flex items-center text-white text-[13px]">
      <div className="w-[36px] flex justify-center">
        <svg width="16" height="16" viewBox="0 0 16 16" fill="#fff"><path d="M0 2.500l7-1v6H0zM8 1.300L16 0v7.500H8zM0 8.500h7v6l-7-1zM8 8.500h8V16l-8-1.300z" /></svg>
      </div>
      <div className="w-[36px] flex justify-center"><div className="w-[15px] h-[15px] rounded-full border-2 border-white" /></div>
      <TaskItem w="w-[153px]" ml="ml-[6px]">
        <div className="ml-[6px] w-[14px] h-[18px] bg-[#f7d77a]" />
        <span className="ml-[5px]">components</span>
      </TaskItem>
      <div className="w-[83px] flex items-center justify-end gap-[18px] pr-[7px]">
        <svg width="18" height="16" viewBox="0 0 18 16"><path d="M2 8l9-6 4 3-8 8z" fill="#ddd" /><circle cx="6" cy="12" r="3" fill="#3c5fb0" /></svg>
        <div className="w-[15px] h-[15px] bg-[#f2a0b2] flex items-center justify-center"><div className="w-[7px] h-[7px] rounded-full border border-white" /></div>
      </div>
      <TaskItem w="w-[152px]" ml="ml-[1px]">
        <div className="ml-[4px]"><ChromeIcon /></div>
        <span className="ml-[4px] whitespace-nowrap">labmod17_ex2/5 - sy...</span>
      </TaskItem>
      <TaskItem w="w-[152px]" ml="ml-[9px]">
        <div className="ml-[4px] w-[16px] h-[16px] rounded-full bg-[#4b2a84] border border-white flex items-center justify-center"><div className="w-[8px] h-[7px] rounded-full bg-white" /></div>
        <span className="ml-[4px] whitespace-nowrap">GitHub Desktop</span>
      </TaskItem>
      <TaskItem w="w-[160px]" ml="ml-[5px]" bg="bg-[#ea6a86]">
        <div className="ml-[7px] w-[15px] h-[18px] bg-[#2c9ca6] text-[11px] font-bold flex items-center justify-center">3</div>
        <span className="ml-[6px] whitespace-nowrap">parti laterali.max - Au...</span>
      </TaskItem>
      <div className="ml-[299px] flex items-center h-full">
        <svg width="16" height="16" viewBox="0 0 16 16" fill="none" stroke="#fff"><circle cx="10" cy="4" r="3" /><path d="M5 15q0-6 5-7 5 1 5 7" /><circle cx="5" cy="8" r="2" /><path d="M1 15q0-4 3-5" /></svg>
        <ChevronUp size={16} className="ml-[15px]" strokeWidth={1.500} />
        <svg width="18" height="14" viewBox="0 0 18 14" className="ml-[6px]"><path d="M4 12a3 3 0 0 1 0-6 5 5 0 0 1 9-1 4 4 0 0 1 1 7z" fill="#2b78c5" /></svg>
        <Wifi size={16} className="ml-[10px]" strokeWidth={1.500} />
        <svg width="18" height="14" viewBox="0 0 18 14" fill="none" stroke="#fff" className="ml-[4px]"><path d="M1 5h3l4-4v12l-4-4H1zM11 5l5 5M16 5l-5 5" /></svg>
        <svg width="18" height="12" viewBox="0 0 18 12" fill="none" stroke="#fff" className="ml-[7px]"><rect x="3" y="2" width="14" height="8" /><path d="M6 4h6v4H6z" fill="#fff" /><path d="M3 0v3M0 3h4" /></svg>
        <span className="ml-[10px] text-[12px]">ITA</span>
        <span className="ml-[15px] text-[12px] tracking-[-0.3px]">19:43</span>
        <svg width="18" height="18" viewBox="0 0 18 18" className="ml-[18px]"><path d="M1 1h16v13h-5l-3 3-3-3H1z" fill="#fff" /><path d="M4 5h10M4 8h10M4 11h6" stroke="#df3a5e" /></svg>
      </div>
    </div>
  );
}

export default function App() {
  return (
    <div className="relative w-[1366px] h-[768px] overflow-hidden flex flex-col bg-[#444] font-['Roboto','Liberation_Sans',sans-serif]">
      <TitleBar />
      <MenuBar />
      <MainToolbar />
      <Ribbon />
      <div className="h-[540px] flex shrink-0">
        <SceneExplorer />
        <Viewports />
        <CommandPanel />
      </div>
      <TimeSlider />
      <TrackBar />
      <StatusBar />
      <Taskbar />
    </div>
  );
}
